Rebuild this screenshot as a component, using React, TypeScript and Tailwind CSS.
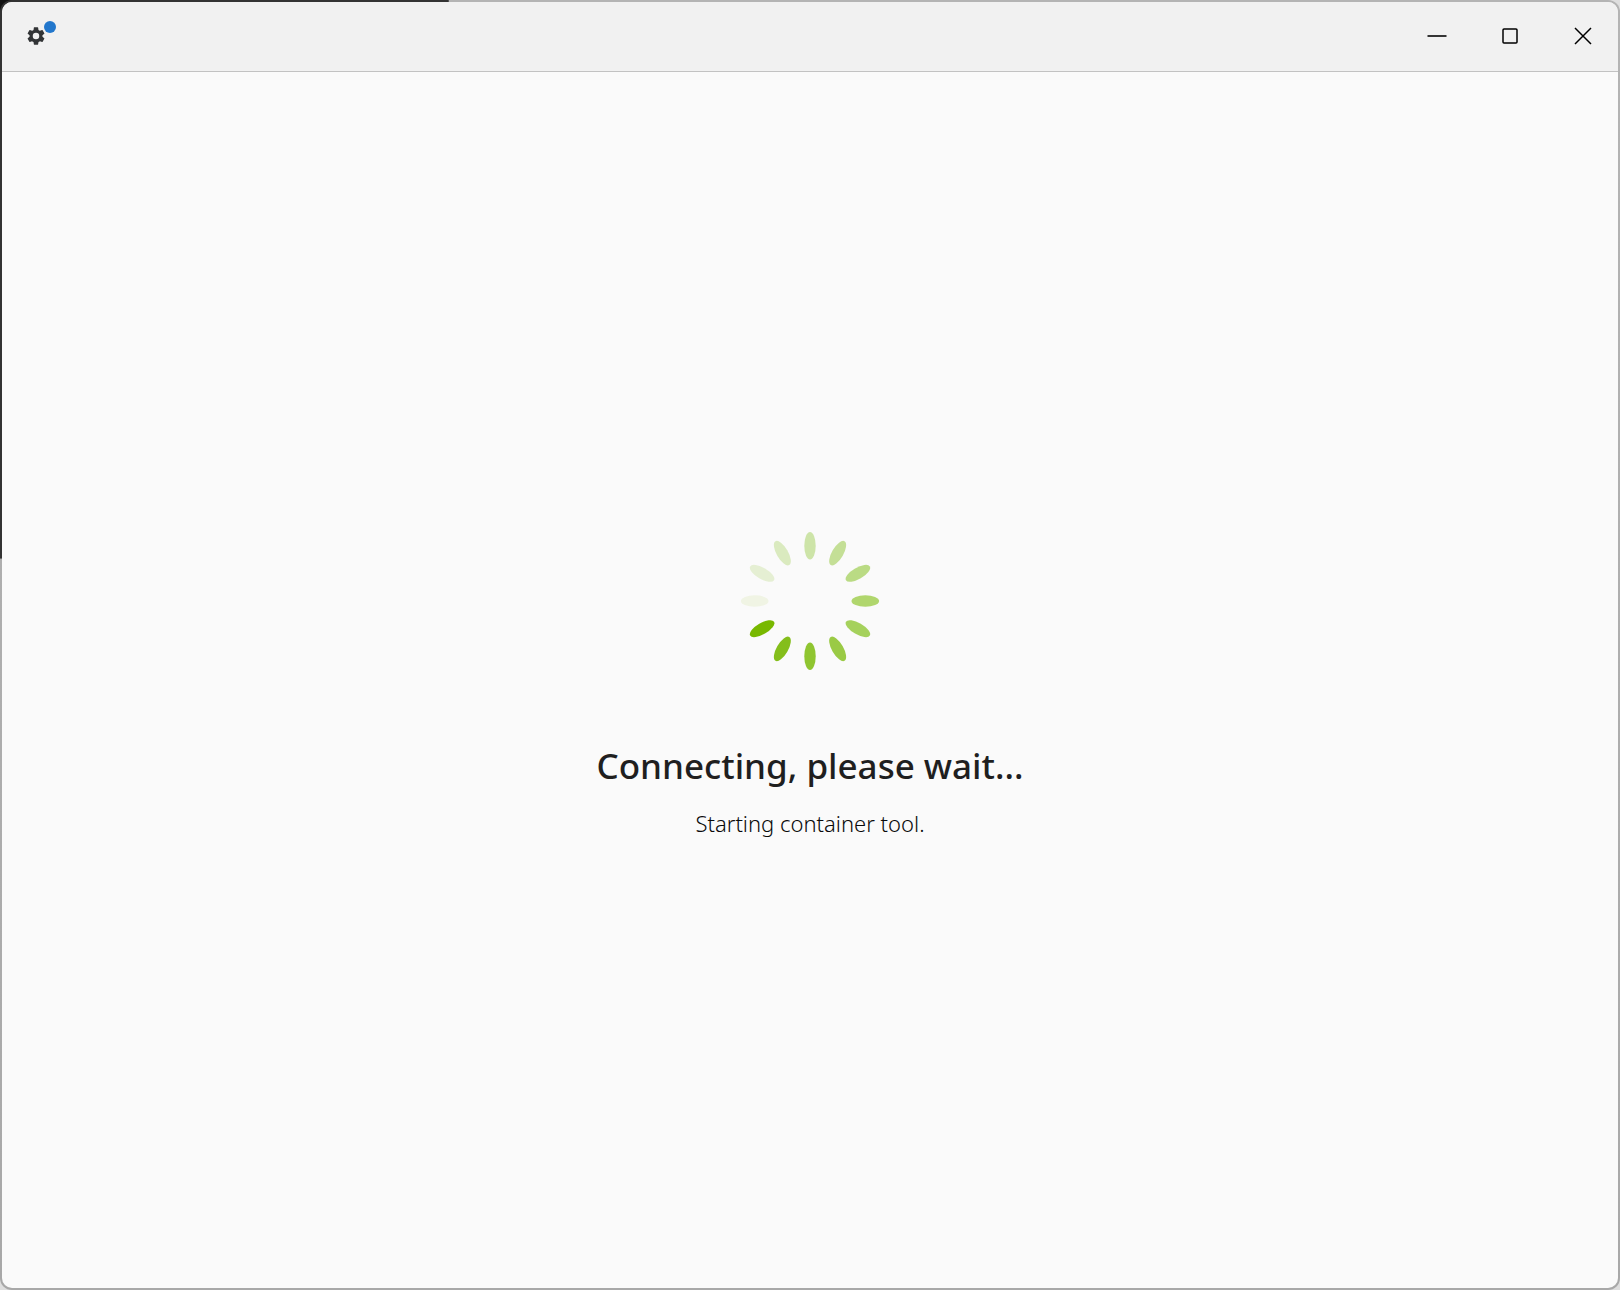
import React from 'react';

const PETAL_COLORS = [
  '#cde4a8',
  '#c4df96',
  '#badb84',
  '#b0d66d',
  '#a5d15c',
  '#9aca45',
  '#8fc530',
  '#84be1b',
  '#78b800',
  '#f0f4e4',
  '#e5efd3',
  '#daeabf',
];

const Spinner: React.FC = () => (
  <svg role="status" aria-label="Loading" viewBox="-70 -70 140 140" className="w-[140px] h-[140px]">
    {PETAL_COLORS.map((color, i) => (
      <ellipse key={color} cx="0" cy="-55.3" rx="5.7" ry="13.8" fill={color} transform={`rotate(${i * 30})`} />
    ))}
  </svg>
);

const GearIcon: React.FC = () => (
  <svg viewBox="2 2 20 20" className="w-[18px] h-[18px] fill-[#323436]">
    <path d="M19.14 12.94c.04-.3.06-.61.06-.94 0-.32-.02-.64-.07-.94l2.03-1.58a.49.49 0 0 0 .12-.61l-1.92-3.32a.49.49 0 0 0-.59-.22l-2.39.96c-.5-.38-1.03-.7-1.62-.94l-.36-2.54a.48.48 0 0 0-.48-.41h-3.84c-.24 0-.43.17-.47.41l-.36 2.54c-.59.24-1.13.57-1.62.94l-2.39-.96a.48.48 0 0 0-.59.22L2.74 8.87a.48.48 0 0 0 .12.61l2.03 1.58c-.05.3-.09.63-.09.94s.02.64.07.94l-2.03 1.58a.49.49 0 0 0-.12.61l1.92 3.32c.12.22.37.29.59.22l2.39-.96c.5.38 1.03.7 1.62.94l.36 2.54c.05.24.24.41.48.41h3.84c.24 0 .44-.17.47-.41l.36-2.54c.59-.24 1.13-.56 1.62-.94l2.39.96c.22.08.47 0 .59-.22l1.92-3.32a.48.48 0 0 0-.12-.61zM12 15.6A3.6 3.6 0 1 1 12 8.4a3.6 3.6 0 0 1 0 7.2" />
  </svg>
);

const windowButtons = [
  {
    label: 'Minimize',
    icon: <path d="M0.5 10h19" stroke="#353535" strokeWidth="2" />,
  },
  {
    label: 'Maximize',
    icon: <rect x="3" y="3" width="14" height="14" rx="1" stroke="#000" strokeWidth="1.5" />,
  },
  {
    label: 'Close',
    icon: <path d="m2 2 16 16M18 2 2 18" stroke="#000" strokeWidth="1.5" />,
  },
];

const TitleBar: React.FC = () => (
  <header className="flex items-center justify-between h-[70px] shrink-0 pl-3 pb-px bg-[#f1f1f1] border-b border-[#c2c2c2]">
    <button aria-label="Settings" className="relative flex items-center justify-center w-11 h-11">
      <GearIcon />
      <span className="absolute top-[7px] right-0.5 w-3 h-3 rounded-full bg-[#2277cc]" />
    </button>
    <div className="flex gap-[3px]">
      {windowButtons.map((button) => (
        <button key={button.label} aria-label={button.label} className="flex items-center justify-center w-[70px] h-11">
          <svg viewBox="0 0 20 20" fill="none" className="w-5 h-5">
            {button.icon}
          </svg>
        </button>
      ))}
    </div>
  </header>
);

export default function App() {
  return (
    <div className="flex min-h-screen bg-[linear-gradient(to_bottom,#111_43.3%,#dedede_43.3%)] font-['Noto_Sans',sans-serif]">
      <div className="flex flex-1 bg-[linear-gradient(to_right,transparent_50%,#dedede_50%)]">
        {/* Window frame, darker where the desktop behind it is dark */}
        <div className="flex flex-1 p-0.5 rounded-xl bg-[linear-gradient(#333,#333),linear-gradient(#333,#333),linear-gradient(#b4b4b4,#a8a8a8)] bg-no-repeat [background-size:27.7%_12px,12px_43.3%,100%_100%]">
          <div className="flex flex-col flex-1 rounded-[10px] overflow-hidden bg-[#fafafa]">
            <TitleBar />
            <main className="flex flex-col items-center justify-center flex-1 pt-2.5 text-center">
              <Spinner />
              <h1 className="mt-[71px] text-[35px] leading-[48px] font-medium text-[#1f1f1f]">Connecting, please wait...</h1>
              <p className="mt-[17px] text-[22px] leading-8 font-light text-[#0a0a0a]">Starting container tool.</p>
            </main>
          </div>
        </div>
      </div>
    </div>
  );
}
